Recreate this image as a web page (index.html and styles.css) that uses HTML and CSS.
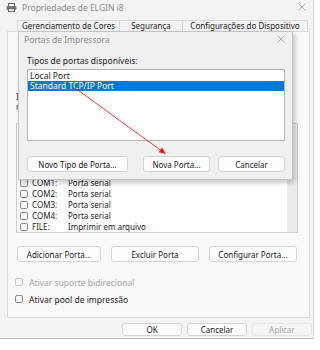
FILE: index.html
```html
<!DOCTYPE html>
<html lang="pt">
<head>
<meta charset="utf-8">
<title>Propriedades de ELGIN i8</title>
<link rel="stylesheet" href="styles.css">
</head>
<body>
<div class="window">
  <div class="titlebar">
    <svg class="app-icon" width="11" height="9" viewBox="0 0 11 9">
      <rect x="2.5" y="0.5" width="6" height="3" fill="#fff" stroke="#6b6b6b"/>
      <rect x="0.5" y="3" width="10" height="4" rx="1" fill="#7a7a7a"/>
      <rect x="2.5" y="5.5" width="6" height="3" fill="#e8e8e8" stroke="#6b6b6b"/>
    </svg>
    <span class="title">Propriedades de ELGIN i8</span>
    <svg class="close" width="8" height="8" viewBox="0 0 8 8">
      <path d="M0.5 0.5 L7.5 7.5 M7.5 0.5 L0.5 7.5" stroke="#9a9a9a" stroke-width="0.8"/>
    </svg>
  </div>
  <div class="tabs">
    <div class="tab t1">Gerenciamento de Cores</div>
    <div class="tab t2">Segurança</div>
    <div class="tab t3">Configurações do Dispositivo</div>
  </div>
  <div class="panel">
    <p class="desc">I<br>r</p>
    <div class="portlist">
      <div class="rows">
        <div class="prow head"></div>
        <div class="prow"><span class="box"></span></div>
        <div class="prow"><span class="box"></span></div>
        <div class="prow"><span class="box"></span></div>
        <div class="prow"><span class="box"></span></div>
        <div class="prow"><span class="box"></span><span class="pname">COM1:</span><span>Porta serial</span></div>
        <div class="prow"><span class="box"></span><span class="pname">COM2:</span><span>Porta serial</span></div>
        <div class="prow"><span class="box"></span><span class="pname">COM3:</span><span>Porta serial</span></div>
        <div class="prow"><span class="box"></span><span class="pname">COM4:</span><span>Porta serial</span></div>
        <div class="prow"><span class="box"></span><span class="pname">FILE:</span><span>Imprimir em arquivo</span></div>
      </div>
      <div class="scroll"></div>
    </div>
    <div class="btnrow">
      <button class="btn w84">Adicionar Porta...</button>
      <button class="btn w88">Excluir Porta</button>
      <button class="btn w88">Configurar Porta...</button>
    </div>
    <div class="chk disabled chk1"><span class="box"></span>Ativar suporte bidirecional</div>
    <div class="chk chk2"><span class="box"></span>Ativar pool de impressão</div>
  </div>
  <div class="footer">
    <button class="btn fb">OK</button>
    <button class="btn fb">Cancelar</button>
    <button class="btn fb off">Aplicar</button>
  </div>
</div>

<div class="dialog">
  <div class="dlg-title">
    <span>Portas de Impressora</span>
    <svg class="close" width="8" height="8" viewBox="0 0 8 8">
      <path d="M0.5 0.5 L7.5 7.5 M7.5 0.5 L0.5 7.5" stroke="#9a9a9a" stroke-width="0.8"/>
    </svg>
  </div>
  <div class="dlg-body">
    <div class="dlg-label">Tipos de portas disponíveis:</div>
    <div class="typelist">
      <div class="titem">Local Port</div>
      <div class="titem sel">Standard TCP/IP Port</div>
    </div>
    <div class="dlg-btns">
      <button class="btn b-novo">Novo Tipo de Porta...</button>
      <button class="btn b67 push">Nova Porta...</button>
      <button class="btn b67">Cancelar</button>
    </div>
  </div>
</div>

<svg class="arrow" width="320" height="350" viewBox="0 0 320 350">
  <line x1="75" y1="88" x2="161" y2="150.5" stroke="#e8201a" stroke-width="0.9"/>
  <polygon points="166,154 158.6,152.3 162.1,147.5" fill="#e8201a"/>
</svg>
</body>
</html>
```

FILE: styles.css
```css
* { box-sizing: border-box; }

html, body {
  margin: 0;
  padding: 0;
}

body {
  width: 320px;
  height: 350px;
  background: #ffffff;
  font-family: "Noto Sans", "Open Sans", sans-serif;
  font-size: 8px;
  color: #1b1b1b;
  position: relative;
  overflow: hidden;
}

button {
  font-family: inherit;
  font-size: 8px;
  color: #1b1b1b;
  padding: 0;
  margin: 0;
}

.window {
  width: 314px;
  height: 339px;
  background: #f3f3f3;
  border-right: 1px solid #d8d8d8;
  border-bottom: 1px solid #b8b8b8;
  display: flex;
  flex-direction: column;
}

.titlebar {
  height: 14px;
  display: flex;
  align-items: center;
  padding: 0 7px 0 6px;
}

.app-icon { flex: none; }

.title {
  margin-left: 5px;
  color: #8a8a8a;
  font-size: 8.5px;
  flex: 1;
}

.close { flex: none; }

.tabs {
  margin-top: 6px;
  margin-left: 17px;
  height: 11px;
  display: flex;
}

.tab {
  height: 11px;
  border: 1px solid #d6d6d6;
  border-bottom: none;
  border-left: none;
  text-align: center;
  line-height: 10px;
  background: #f3f3f3;
}

.t1 { width: 103px; border-left: 1px solid #d6d6d6; }
.t2 { width: 63px; }
.t3 { width: 125px; }

.panel {
  margin-left: 7px;
  width: 303px;
  height: 287px;
  background: #f9f9f9;
  border: 1px solid #dadada;
  padding-left: 8px;
  display: flex;
  flex-direction: column;
}

.desc {
  margin: 60px 0 0 0;
  width: 3px;
  line-height: 10px;
  height: 31px;
  color: #333;
}

.portlist {
  width: 282px;
  height: 110px;
  background: #ffffff;
  border: 1px solid #cfcfcf;
  display: flex;
}

.rows { flex: 1; }

.scroll {
  width: 10px;
  background: #ececec;
}

.prow {
  height: 11px;
  display: flex;
  align-items: center;
  padding-left: 3px;
  white-space: nowrap;
}

.prow.head {
  height: 9px;
}

.prow .box { margin-right: 4px; }

.pname { width: 36px; }

.box {
  width: 8px;
  height: 8px;
  border: 1px solid #8a8a8a;
  border-radius: 2px;
  background: #fdfdfd;
  flex: none;
}

.btnrow {
  margin-top: 13px;
  margin-left: 1px;
  display: flex;
  gap: 10px;
}

.btn {
  height: 16px;
  background: #fdfdfd;
  border: 1px solid #d3d3d3;
  border-radius: 3px;
  text-align: center;
}

.w84 { width: 84px; }
.w88 { width: 88px; }

.chk {
  display: flex;
  align-items: center;
  height: 12px;
  margin-left: -1px;
  font-size: 8.5px;
}

.chk .box { margin-right: 6px; }

.chk1 { margin-top: 14px; }
.chk2 { margin-top: 5px; }

.chk.disabled { color: #a3a3a3; }
.chk.disabled .box { border-color: #c8c8c8; background: #f6f6f6; }

.footer {
  margin-top: 5px;
  display: flex;
  justify-content: flex-end;
  gap: 5px;
  padding-right: 1px;
}

.fb {
  width: 60px;
  height: 13px;
  line-height: 11px;
}

.fb.off {
  color: #a6a6a6;
  background: #f5f5f5;
  border-color: #e6e6e6;
}

/* overlay dialog */
.dialog {
  position: absolute;
  left: 18px;
  top: 31px;
  width: 275px;
  height: 149px;
  background: #f0f0f0;
  border: 1px solid #c4c4c4;
  box-shadow: 2px 3px 5px rgba(0, 0, 0, 0.22);
}

.dlg-title {
  height: 14px;
  display: flex;
  align-items: center;
  justify-content: space-between;
  padding: 0 7px 0 5px;
  color: #8a8a8a;
  font-size: 8.5px;
}

.dlg-body {
  padding: 0 7px 0 8px;
  display: flex;
  flex-direction: column;
}

.dlg-label {
  margin-top: 10px;
  height: 10px;
  line-height: 10px;
  font-size: 8.5px;
}

.typelist {
  margin-top: 3px;
  height: 72px;
  background: #ffffff;
  border: 1px solid #b4b4b4;
  padding-top: 1px;
}

.titem {
  height: 10px;
  line-height: 10px;
  padding-left: 2px;
  font-size: 8.5px;
}

.titem.sel {
  background: #0078d7;
  color: #ffffff;
}

.dlg-btns {
  margin-top: 15px;
  display: flex;
  gap: 8px;
}

.b-novo { width: 101px; }
.b67 { width: 67px; }
.push { margin-left: auto; }

.arrow {
  position: absolute;
  left: 0;
  top: 0;
  pointer-events: none;
}
```
